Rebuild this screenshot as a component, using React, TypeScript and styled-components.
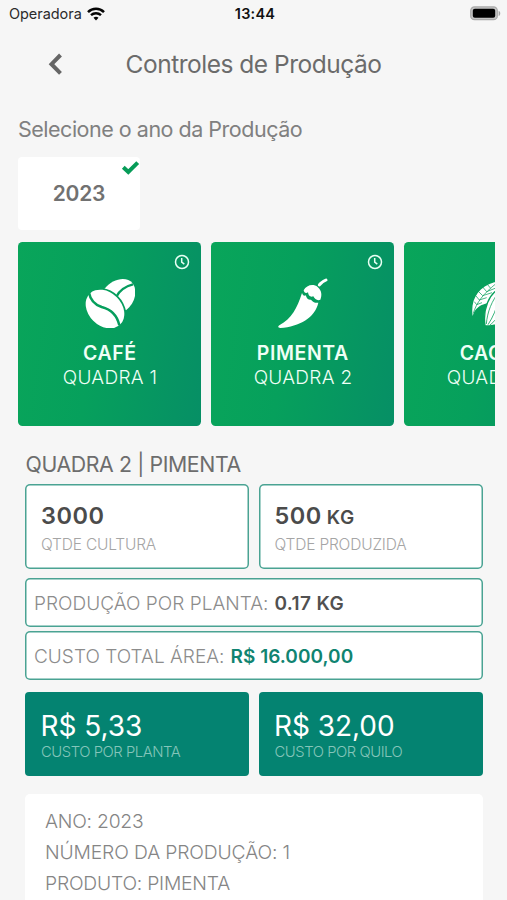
import React from 'react';
import styled, { createGlobalStyle } from 'styled-components';

const GlobalStyle = createGlobalStyle`
  * { box-sizing: border-box; }
  body {
    margin: 0;
    background: #f6f6f6;
    font-family: Inter, "Liberation Sans", sans-serif;
  }
`;

const Screen = styled.div`
  height: 900px;
  overflow: hidden;
  background: #f6f6f6;
  display: flex;
  flex-direction: column;
`;

const StatusBar = styled.div`
  height: 27px;
  flex: none;
  display: grid;
  grid-template-columns: 1fr auto 1fr;
  align-items: center;
  padding: 0 6px 0 9px;
  color: #111;
`;

const Carrier = styled.div`
  display: flex;
  align-items: center;
  gap: 5.5px;
  font-size: 14.5px;
  line-height: 17px;
  letter-spacing: -0.05px;
  color: #2b2b2b;
`;

const Clock = styled.div`
  font-size: 14.5px;
  line-height: 17px;
  font-weight: 600;
  letter-spacing: 0.2px;
`;

const BatterySlot = styled.div`
  display: flex;
  justify-content: flex-end;
`;

const Header = styled.header`
  height: 73px;
  flex: none;
  display: grid;
  grid-template-columns: 48px 1fr 48px;
  align-items: center;
  padding-left: 48px;
  padding-right: 48px;
`;

const BackButton = styled.button`
  border: 0;
  padding: 0;
  background: none;
  display: flex;
`;

const Title = styled.h1`
  margin: 0;
  text-align: center;
  font-size: 24.5px;
  line-height: 30px;
  font-weight: 400;
  letter-spacing: -0.49px;
  color: #6b6b6b;
  white-space: nowrap;
`;

const Prompt = styled.p`
  margin: 14px 0 0 18px;
  font-size: 21.5px;
  line-height: 30px;
  letter-spacing: -0.49px;
  color: #808080;
`;

const YearCard = styled.div`
  position: relative;
  width: 122px;
  height: 73px;
  margin: 13px 0 0 18px;
  flex: none;
  display: flex;
  align-items: center;
  justify-content: center;
  border-radius: 4px;
  background: #fff;
  color: #717171;
  font-size: 21px;
  font-weight: 600;
  letter-spacing: -0.2px;
`;

const CheckMark = styled.svg`
  position: absolute;
  top: 3px;
  right: 0;
`;

const Carousel = styled.div`
  display: flex;
  gap: 10px;
  margin: 12px 12px 0 18px;
  overflow: hidden;
  flex: none;
`;

const CropCard = styled.div<{ $end: string }>`
  position: relative;
  width: 183px;
  height: 184px;
  flex: none;
  display: flex;
  flex-direction: column;
  align-items: center;
  padding-top: 36px;
  border-radius: 4.5px;
  background: linear-gradient(98deg, #09a55a 0%, #06a05c 42%, ${(p) => p.$end} 100%);
  color: #effff6;
`;

const ClockIcon = styled.svg`
  position: absolute;
  top: 12px;
  right: 11.5px;
`;

const CropName = styled.div`
  margin-top: 13px;
  font-size: 19.5px;
  line-height: 24px;
  font-weight: 600;
  letter-spacing: 0.6px;
  text-indent: 0.6px;
`;

const CropPlot = styled.div`
  font-size: 19px;
  line-height: 26px;
  font-weight: 300;
  letter-spacing: 0.3px;
  text-indent: 1px;
`;

const Details = styled.section`
  margin: 0 24.5px 0 25px;
  display: flex;
  flex-direction: column;
`;

const SectionTitle = styled.h2`
  margin: 23px 0 5px;
  padding-left: 0.5px;
  font-size: 21.3px;
  line-height: 30px;
  font-weight: 400;
  letter-spacing: -0.39px;
  color: #6d6d6d;
`;

const Pair = styled.div`
  display: grid;
  grid-template-columns: 1fr 1fr;
  gap: 9.5px;
`;

const StatCard = styled.div`
  height: 85px;
  padding: 16px 0 0 16px;
  box-shadow: inset 0 0 0 1.5px #4aa393;
  border-radius: 5px;
  background: #fff;
`;

const StatValue = styled.div`
  height: 30px;
  font-size: 23.5px;
  line-height: 31px;
  font-weight: 600;
  letter-spacing: 0.5px;
  color: #4b4b4b;
`;

const StatUnit = styled.span`
  margin-left: 5px;
  font-size: 19px;
  line-height: 1;
  letter-spacing: 0.5px;
`;

const StatLabel = styled.div`
  font-size: 15.5px;
  line-height: 30px;
  font-weight: 300;
  letter-spacing: -0.18px;
  color: #a5a5a5;
`;

const InfoRow = styled.div<{ $gap: number }>`
  height: 49px;
  margin-top: ${(p) => p.$gap}px;
  padding: 2px 0 0 9px;
  display: flex;
  align-items: center;
  gap: 6px;
  box-shadow: inset 0 0 0 1.5px #4aa393;
  border-radius: 5px;
  background: #fff;
  font-size: 19px;
  line-height: 24px;
  font-weight: 300;
  letter-spacing: 0.03px;
  color: #8c8c8c;
`;

const InfoValue = styled.strong<{ $accent?: boolean }>`
  font-weight: 600;
  letter-spacing: ${(p) => (p.$accent ? '0.03px' : '0.4px')};
  color: ${(p) => (p.$accent ? '#108471' : '#515151')};
`;

const CostPair = styled(Pair)`
  margin-top: 12px;
`;

const CostCard = styled.div`
  height: 84px;
  padding: 18.5px 0 0 15.5px;
  border-radius: 4px;
  background: #048371;
`;

const CostValue = styled.div`
  font-size: 28px;
  line-height: 30px;
  letter-spacing: -0.05px;
  color: #fff;
`;

const CostLabel = styled.div`
  padding-left: 0.5px;
  font-size: 14.8px;
  line-height: 23px;
  font-weight: 300;
  letter-spacing: -0.45px;
  color: #84c5ba;
`;

const Summary = styled.div`
  margin-top: 18px;
  height: 140px;
  padding: 12px 20px;
  border-radius: 5px;
  background: #fff;
  font-size: 19.3px;
  line-height: 31px;
  font-weight: 300;
  color: #858585;
`;

const SummaryLine = styled.div<{ $tight?: boolean }>`
  letter-spacing: ${(p) => (p.$tight ? '-0.22px' : '-0.14px')};
`;

const Wifi = () => (
  <svg width="18" height="14" viewBox="0 0 18 14" fill="none" stroke="#050505">
    <path d="M1 5.1C5.4.7 12.6.7 17 5.1" strokeWidth="2.5" />
    <path d="M4 8.2c2.8-2.7 7.2-2.7 10 0" strokeWidth="2.4" />
    <path d="M6.5 10.7c1.4-1.4 3.6-1.4 5 0L9 13.5z" fill="#050505" stroke="none" />
  </svg>
);

const Battery = () => (
  <svg width="31" height="15" viewBox="0 0 31 15">
    <rect x="0.7" y="0.9" width="26.6" height="12.8" rx="3.8" fill="#c4c4c4" stroke="#a9a9a9" strokeWidth="1.2" />
    <rect x="2.8" y="2.8" width="22.4" height="9" rx="2" fill="#000" />
    <path d="M28.6 4.7c2.2.7 2.2 4.6 0 5.3z" fill="#a5a5a5" />
  </svg>
);

const Coffee = () => (
  <svg width="50" height="50" viewBox="0 0 150 150">
    <defs>
      <mask id="backBean" maskUnits="userSpaceOnUse" x="0" y="0" width="150" height="150">
        <rect width="150" height="150" fill="#fff" />
        <ellipse cx="60" cy="93" rx="71" ry="55" transform="rotate(45 60 93)" fill="#000" />
        <path d="M94 56C104 36 117 26 144 19" fill="none" stroke="#000" strokeWidth="7" />
      </mask>
      <mask id="frontBean" maskUnits="userSpaceOnUse" x="0" y="0" width="150" height="150">
        <rect width="150" height="150" fill="#fff" />
        <path d="M12 44C16 66 30 80 50 87C78 94 96 110 103 142" fill="none" stroke="#000" strokeWidth="7.500" />
      </mask>
    </defs>
    <path d="M58 33C82 0 126-6 142 15C160 39 150 76 123 97L90 75Z" fill="#fff" mask="url(#backBean)" />
    <g mask="url(#frontBean)">
      <ellipse cx="60" cy="93" rx="65" ry="50" transform="rotate(45 60 93)" fill="#fff" />
    </g>
  </svg>
);

const Pepper = () => (
  <svg width="50" height="50" viewBox="0 0 150 150" fill="#fff">
    <path d="M72 45C57 91 42 121 4 142C-2 146 1 150 7 150C65 145 111 119 121 74C112 76 104 72 99 65C88 67 86 58 83 52C78 55 74 51 72 45Z" />
    <path d="M77 37C85 21 106 16 119 27C132 38 132 53 127 65C119 69 110 64 106 55C97 59 91 53 90 43C84 48 78 44 77 37Z" />
    <path d="M124 21C128 14 135 10 144 6" fill="none" stroke="#fff" strokeWidth="9" strokeLinecap="round" />
  </svg>
);

const Cacao = () => (
  <svg width="50" height="50" viewBox="0 0 150 150" fill="none">
    <path d="M5 114C-2 66 20 23 80 10C80 38 70 72 43 77C25 81 10 94 5 114Z" fill="#fff" />
    <path
      d="M7 106C17 72 37 48 76 16M17 80l-7-9M25 66l-10-12M35 53L22 40M47 41L35 27M59 31L49 19M25 66l22-7M35 53l28-9M47 41l25-10M17 80l16-6"
      stroke="#079f5a"
      strokeWidth="2.2"
    />
    <path d="M42 143C35 95 53 45 90 30C132 50 136 105 88 134C73 143 58 145 42 143Z" fill="#fff" stroke="#079f5a" strokeWidth="4" />
    <path
      d="M46 138C49 102 62 68 87 38M51 140C65 119 77 92 84 61M57 141C72 129 88 111 99 80"
      stroke="#079f5a"
      strokeWidth="2.4"
    />
  </svg>
);

const HistoryClock = () => (
  <ClockIcon width="16" height="16" viewBox="0 0 16 16" fill="none" stroke="#e8fff4" strokeWidth="1.5">
    <circle cx="8" cy="8" r="6.500" />
    <path d="M7.700 3.900v4.300l2.600 1.900" />
  </ClockIcon>
);

const crops = [
  { name: 'CAFÉ', plot: 'QUADRA 1', Icon: Coffee, end: '#068f65' },
  { name: 'PIMENTA', plot: 'QUADRA 2', Icon: Pepper, end: '#068f65' },
  { name: 'CACAU', plot: 'QUADRA 3', Icon: Cacao, end: '#068f65' },
];

export default function App() {
  return (
    <Screen>
      <GlobalStyle />
      <StatusBar>
        <Carrier>
          Operadora
          <Wifi />
        </Carrier>
        <Clock>13:44</Clock>
        <BatterySlot>
          <Battery />
        </BatterySlot>
      </StatusBar>
      <Header>
        <BackButton aria-label="Voltar">
          <svg width="16" height="24" viewBox="0 0 16 24" fill="none" stroke="#666" strokeWidth="4">
            <path d="M12.500 3L3.500 12.200L12.500 21.400" />
          </svg>
        </BackButton>
        <Title>Controles de Produção</Title>
      </Header>
      <Prompt>Selecione o ano da Produção</Prompt>
      <YearCard>
        2023
        <CheckMark width="19" height="16" viewBox="0 0 19 16" fill="none" stroke="#079c58" strokeWidth="4">
          <path d="M2.300 7.200L7.300 11.900L16.700 2.600" />
        </CheckMark>
      </YearCard>
      <Carousel>
        {crops.map(({ name, plot, Icon, end }) => (
          <CropCard key={name} $end={end}>
            <HistoryClock />
            <Icon />
            <CropName>{name}</CropName>
            <CropPlot>{plot}</CropPlot>
          </CropCard>
        ))}
      </Carousel>
      <Details>
        <SectionTitle>QUADRA 2 | PIMENTA</SectionTitle>
        <Pair>
          <StatCard>
            <StatValue>3000</StatValue>
            <StatLabel>QTDE CULTURA</StatLabel>
          </StatCard>
          <StatCard>
            <StatValue>
              500<StatUnit>KG</StatUnit>
            </StatValue>
            <StatLabel>QTDE PRODUZIDA</StatLabel>
          </StatCard>
        </Pair>
        <InfoRow $gap={9}>
          PRODUÇÃO POR PLANTA: <InfoValue>0.17 KG</InfoValue>
        </InfoRow>
        <InfoRow $gap={4}>
          CUSTO TOTAL ÁREA: <InfoValue $accent>R$ 16.000,00</InfoValue>
        </InfoRow>
        <CostPair>
          <CostCard>
            <CostValue>R$ 5,33</CostValue>
            <CostLabel>CUSTO POR PLANTA</CostLabel>
          </CostCard>
          <CostCard>
            <CostValue>R$ 32,00</CostValue>
            <CostLabel>CUSTO POR QUILO</CostLabel>
          </CostCard>
        </CostPair>
        <Summary>
          <SummaryLine $tight>ANO: 2023</SummaryLine>
          <SummaryLine>NÚMERO DA PRODUÇÃO: 1</SummaryLine>
          <SummaryLine $tight>PRODUTO: PIMENTA</SummaryLine>
        </Summary>
      </Details>
    </Screen>
  );
}
